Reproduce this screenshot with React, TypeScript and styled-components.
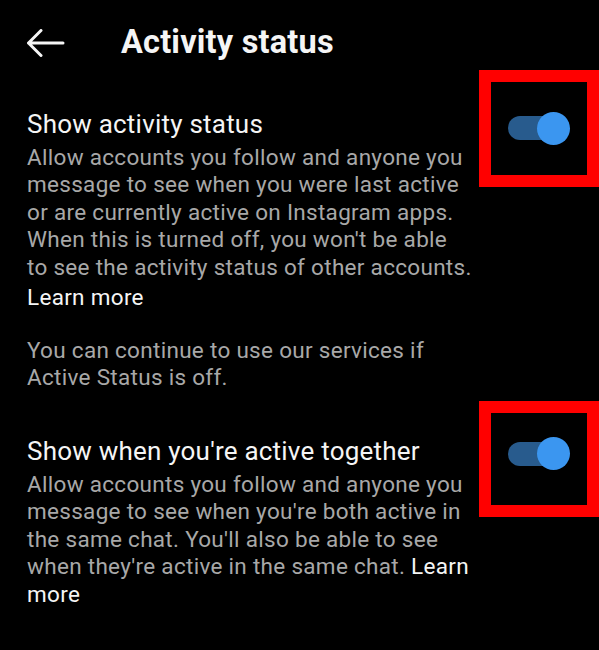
import styled, { createGlobalStyle } from 'styled-components';

const GlobalStyle = createGlobalStyle`
  html, body {
    margin: 0;
    background: #000;
  }
  body {
    font-family: Roboto, 'Noto Sans', sans-serif;
    -webkit-font-smoothing: antialiased;
  }
`;

const Screen = styled.div`
  width: 599px;
  min-height: 650px;
  box-sizing: border-box;
  padding: 22px 29px 0 27px;
  background: #000;
  overflow: hidden;
`;

const Header = styled.header`
  display: flex;
  align-items: center;
  height: 40px;
`;

const BackButton = styled.button`
  display: flex;
  align-items: center;
  padding: 0;
  margin: 2px 56px 0 0;
  border: 0;
  background: none;
  cursor: pointer;
`;

const HeaderTitle = styled.h1`
  margin: 0;
  color: #f5f5f5;
  font-size: 32.5px;
  line-height: 40px;
  font-weight: 700;
  letter-spacing: 0.2px;
`;

const Setting = styled.section<{ $gap: number }>`
  display: flex;
  align-items: flex-start;
  gap: 14px;
  margin-top: ${(p) => p.$gap}px;
`;

const SettingBody = styled.div`
  flex: 1;
  min-width: 0;
`;

const SettingTitle = styled.h2`
  margin: 0;
  color: #f5f5f5;
  font-size: 26px;
  line-height: 32px;
  font-weight: 400;
  letter-spacing: 0.22px;
`;

const Desc = styled.p<{ $top?: number }>`
  margin: ${(p) => p.$top ?? 0}px 0 0;
  color: #a8a8a8;
  font-size: 22.5px;
  line-height: 27.5px;
  font-weight: 400;
  letter-spacing: 0.3px;
  white-space: nowrap;
`;

const LearnMore = styled.a<{ $block?: boolean }>`
  display: ${(p) => (p.$block ? 'block' : 'inline')};
  margin-top: ${(p) => (p.$block ? 2.5 : 0)}px;
  color: #f5f5f5;
  font-size: 22.5px;
  line-height: 27.5px;
  letter-spacing: 0.3px;
  text-decoration: none;
`;

const Note = styled(Desc)`
  margin-top: 25.5px;
`;

const ToggleSlot = styled.div<{ $top: number }>`
  position: relative;
  flex: none;
  width: 62px;
  height: 33px;
  margin-top: ${(p) => p.$top}px;
`;

const Track = styled.div`
  width: 58px;
  height: 24px;
  margin-top: 4.5px;
  border-radius: 12px;
  background: #285b8d;
`;

const Thumb = styled.div`
  position: absolute;
  top: 0;
  right: 0;
  width: 33px;
  height: 33px;
  border-radius: 50%;
  background: #3b96f0;
`;

// red callout frame drawn around a switch
const Highlight = styled.div<{ $top: number; $height: number }>`
  position: absolute;
  left: -29px;
  top: ${(p) => p.$top}px;
  width: 120px;
  height: ${(p) => p.$height}px;
  box-sizing: border-box;
  border: 12px solid #ff0000;
  pointer-events: none;
`;

const BackArrow = () => (
  <svg width="38" height="28" viewBox="0 0 38 28" fill="none">
    <path
      d="M36 14H1.5M14 1.5L1.5 14 14 26.5"
      stroke="#f5f5f5"
      strokeWidth="3"
      strokeLinecap="round"
      strokeLinejoin="round"
    />
  </svg>
);

const Toggle = ({ top, frameTop, frameHeight }: { top: number; frameTop: number; frameHeight: number }) => (
  <ToggleSlot $top={top}>
    <Track />
    <Thumb />
    <Highlight $top={frameTop} $height={frameHeight} />
  </ToggleSlot>
);

export default function App() {
  return (
    <>
      <GlobalStyle />
      <Screen>
        <Header>
          <BackButton aria-label="Back">
            <BackArrow />
          </BackButton>
          <HeaderTitle>Activity status</HeaderTitle>
        </Header>

        <Setting $gap={46}>
          <SettingBody>
            <SettingTitle>Show activity status</SettingTitle>
            <Desc $top={3.75}>
              Allow accounts you follow and anyone you
              <br />
              message to see when you were last active
              <br />
              or are currently active on Instagram apps.
              <br />
              When this is turned off, you won't be able
              <br />
              to see the activity status of other accounts.
            </Desc>
            <LearnMore $block href="#">
              Learn more
            </LearnMore>
          </SettingBody>
          <Toggle top={3.7} frameTop={-41.7} frameHeight={117} />
        </Setting>

        <Note>
          You can continue to use our services if
          <br />
          Active Status is off.
        </Note>

        <Setting $gap={43}>
          <SettingBody>
            <SettingTitle>Show when you're active together</SettingTitle>
            <Desc $top={3.75}>
              Allow accounts you follow and anyone you
              <br />
              message to see when you're both active in
              <br />
              the same chat. You'll also be able to see
              <br />
              when they're active in the same chat.{' '}
              <LearnMore href="#">
                Learn
                <br />
                more
              </LearnMore>
            </Desc>
          </SettingBody>
          <Toggle top={2.5} frameTop={-36.5} frameHeight={116} />
        </Setting>
      </Screen>
    </>
  );
}
